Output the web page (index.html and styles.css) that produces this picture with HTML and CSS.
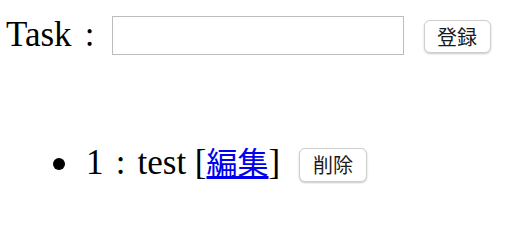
FILE: index.html
```html
<!DOCTYPE html>
<html lang="ja">
<head>
<meta charset="utf-8">
<title>Task</title>
<link rel="stylesheet" href="styles.css">
</head>
<body>
<form class="task-form">
  <label class="task-label" for="task">Task<span class="colon">:</span></label>
  <input class="task-input" id="task" type="text">
  <button class="btn btn-register" type="button">登録</button>
</form>
<ul class="task-list">
  <li class="task-item">1<span class="colon colon-item">:</span>test [<a class="edit-link" href="#">編集</a>] <button class="btn btn-delete" type="button">削除</button></li>
</ul>
</body>
</html>
```

FILE: styles.css
```css
html, body {
  margin: 0;
  padding: 0;
  background: #ffffff;
}

body {
  font-family: "Liberation Serif", "Noto Sans CJK JP", serif;
  font-size: 35px;
  color: #000000;
}

.task-form {
  display: flex;
  align-items: flex-start;
  padding-left: 6px;
  margin: 0;
  height: 55px;
}

.task-label {
  margin-top: 15px;
  line-height: 40px;
  white-space: nowrap;
}

.colon {
  display: inline-block;
  width: 36px;
  text-align: center;
}

.colon-item {
  width: 34px;
}

.task-input {
  box-sizing: border-box;
  margin: 16px 0 0 4px;
  width: 292px;
  height: 39px;
  border: 1px solid #bcbcbc;
  border-radius: 0;
  padding: 0 6px;
  background: #ffffff;
  outline: none;
}

.btn {
  box-sizing: border-box;
  background: #ffffff;
  border: 1px solid #cfcfcf;
  border-radius: 6px;
  box-shadow: 0 1px 2px rgba(0, 0, 0, 0.22);
  font-family: "Noto Sans CJK JP", sans-serif;
  font-size: 20px;
  color: #1a1a1a;
  padding: 0;
  line-height: 1;
}

.btn-register {
  margin: 20px 0 0 20px;
  width: 67px;
  height: 33px;
}

.task-list {
  margin: 88px 0 0 0;
  padding-left: 86px;
  list-style: none;
}

.task-item {
  line-height: 40px;
  white-space: nowrap;
}

.task-item::before {
  content: "";
  display: inline-block;
  width: 12px;
  height: 12px;
  border-radius: 50%;
  background: #000000;
  margin-left: -33px;
  margin-right: 21px;
  vertical-align: 4px;
}

.edit-link {
  color: #0000ee;
  font-size: 31px;
  text-decoration: underline;
}

.btn-delete {
  vertical-align: top;
  margin: 5px 0 0 10px;
  width: 68px;
  height: 34px;
}
```
